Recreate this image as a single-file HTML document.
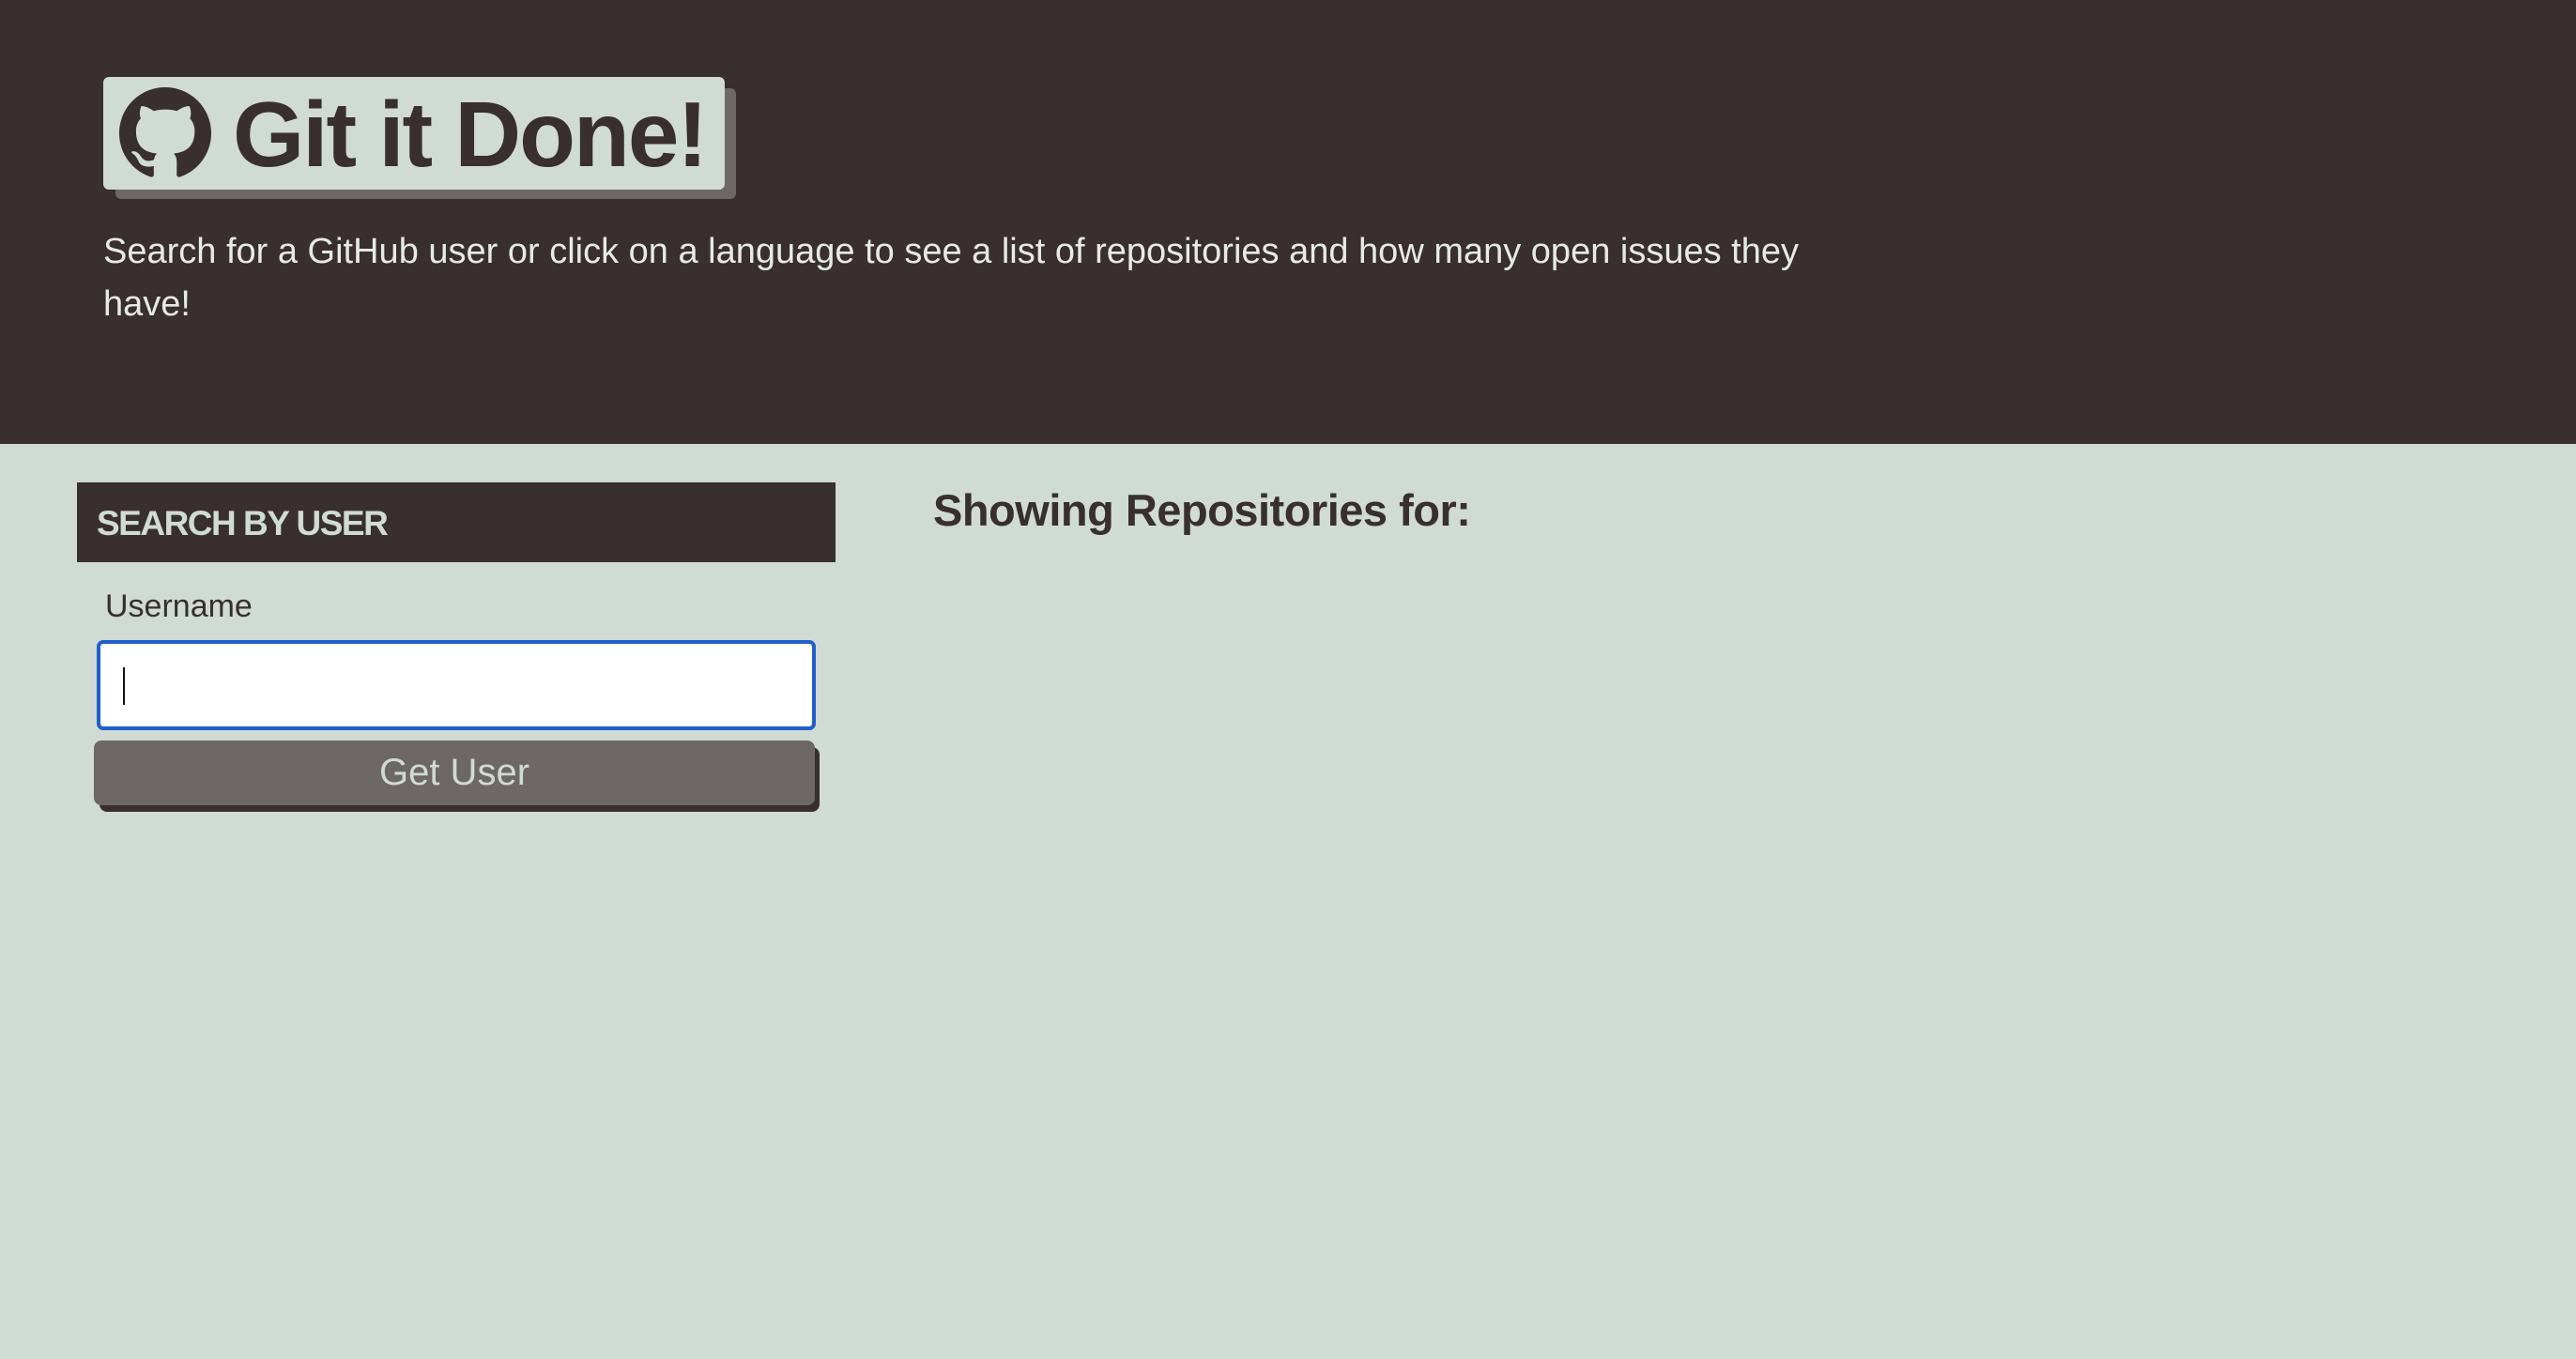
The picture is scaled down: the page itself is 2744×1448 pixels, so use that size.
<!DOCTYPE html>
<html><head><meta charset="utf-8"><style>
*{margin:0;padding:0;box-sizing:border-box}
body{width:2744px;height:1448px;background:#cfdbd3;font-family:"Liberation Sans",sans-serif;position:relative;overflow:hidden}
.hdr{position:absolute;left:0;top:0;width:2744px;height:473px;background:#382f2e}
.logo-sh{position:absolute;left:123px;top:94px;width:661px;height:118px;background:#6d6865;border-radius:6px}
.logo{position:absolute;left:110px;top:82px;width:662px;height:120px;background:#cfdbd3;border-radius:6px}
.logo svg{position:absolute;left:17px;top:11px}
.logo .t{position:absolute;left:138px;top:6px;font-size:98px;font-weight:bold;color:#382f2e;letter-spacing:-2px;line-height:110px}
.desc{position:absolute;left:110px;top:240px;width:1840px;font-size:38px;line-height:56px;color:#e6ebe7}
.sb{position:absolute;left:82px;top:514px;width:808px;height:85px;background:#382f2e}
.sb span{position:absolute;left:21px;top:23px;font-size:37px;font-weight:bold;color:#cfdbd3;letter-spacing:-1.5px}
.lbl{position:absolute;left:112px;top:627px;font-size:34px;color:#382f2e}
.inp{position:absolute;left:103px;top:682px;width:766px;height:96px;background:#fff;border:4px solid #1f5fcb;border-radius:7px}
.caret{position:absolute;left:24px;top:25px;width:2px;height:40px;background:#111}
.btn-sh{position:absolute;left:106px;top:796px;width:767px;height:69px;background:#382f2e;border-radius:8px}
.btn{position:absolute;left:100px;top:789px;width:768px;height:69px;background:#6d6865;border-radius:8px;color:#cfdbd3;font-size:40px;text-align:center;line-height:69px}
.h2{position:absolute;left:994px;top:516px;font-size:47px;font-weight:bold;color:#382f2e;letter-spacing:-0.5px}
</style></head><body>
<div class="hdr">
<div class="logo-sh"></div>
<div class="logo">
<svg width="98" height="98" viewBox="0 0 16 16"><path fill="#382f2e" d="M8 0C3.58 0 0 3.58 0 8c0 3.54 2.29 6.53 5.470 7.59.4.07.55-.17.55-.38 0-.19-.01-.82-.01-1.490-2.010.37-2.530-.49-2.690-.94-.09-.23-.48-.94-.82-1.130-.28-.15-.68-.52-.01-.53.63-.01 1.080.58 1.230.82.72 1.210 1.870.87 2.330.66.07-.52.28-.87.51-1.070-1.780-.2-3.640-.89-3.640-3.950 0-.87.31-1.590.82-2.150-.08-.2-.36-1.020.08-2.120 0 0 .67-.21 2.200.82.64-.18 1.320-.27 2-.27.68 0 1.360.09 2 .27 1.530-1.040 2.200-.82 2.200-.82.44 1.100.16 1.920.08 2.120.51.56.82 1.270.82 2.150 0 3.070-1.870 3.750-3.650 3.950.29.25.54.73.54 1.480 0 1.070-.01 1.930-.01 2.200 0 .21.15.46.55.38A8.013 8.013 0 0016 8c0-4.420-3.580-8-8-8z"/></svg>
<div class="t">Git it Done!</div>
</div>
<div class="desc">Search for a GitHub user or click on a language to see a list of repositories and how many open issues they have!</div>
</div>
<div class="sb"><span>SEARCH BY USER</span></div>
<div class="lbl">Username</div>
<div class="inp"><div class="caret"></div></div>
<div class="btn-sh"></div>
<div class="btn">Get User</div>
<div class="h2">Showing Repositories for:</div>
</body></html>
